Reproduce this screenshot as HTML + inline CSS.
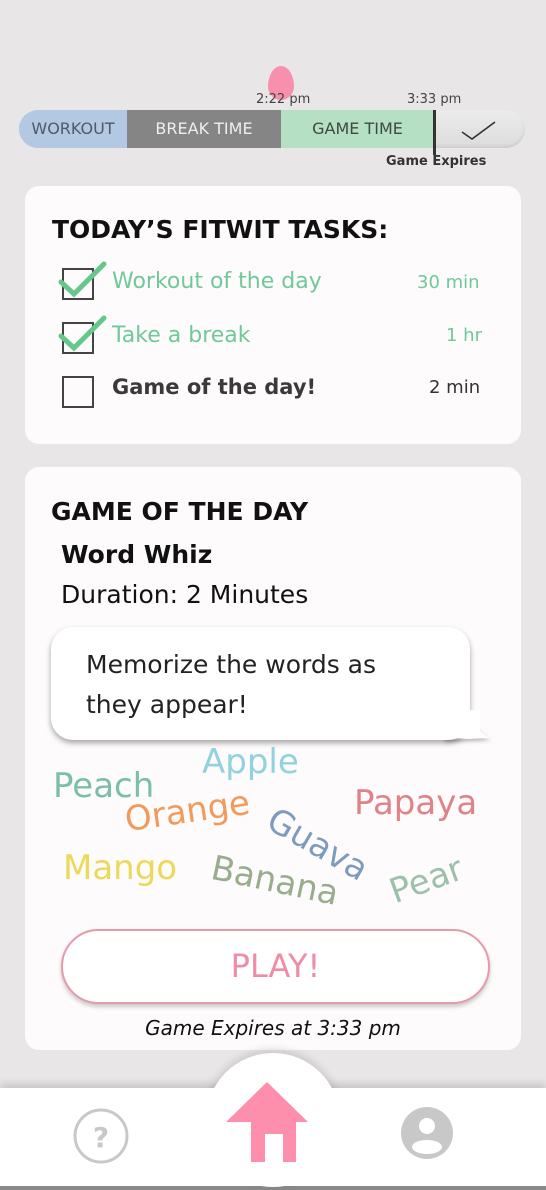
<!DOCTYPE html>
<html><head><meta charset="utf-8"><style>
*{margin:0;padding:0;box-sizing:border-box}
body{width:546px;height:1190px;background:#e8e6e7;font-family:"DejaVu Sans","Liberation Sans",sans-serif;position:relative;overflow:hidden;color:#222}
.abs{position:absolute}
.card{position:absolute;left:25px;width:496px;background:#fdfbfb;border-radius:14px}
.w{position:absolute;white-space:nowrap;font-size:34px}
</style></head><body>
<!-- timeline -->
<div class="abs" style="left:268px;top:66px;width:26px;height:34px;background:#f890ad;border-radius:50% 50% 50% 50%/60% 60% 40% 40%"></div>
<div class="abs" style="left:256px;top:92px;font-size:13px;color:#444">2:22 pm</div>
<div class="abs" style="left:407px;top:92px;font-size:13px;color:#444">3:33 pm</div>
<div class="abs" style="left:19px;top:110px;width:506px;height:38px;border-radius:19px;overflow:hidden;background:linear-gradient(#ececec,#dcdcdc);box-shadow:inset 0 -2px 3px rgba(0,0,0,.08)">
 <div class="abs" style="left:0;top:0;width:108px;height:38px;background:#b3c8e2;color:#4c5a6a;font-size:16px;line-height:38px;text-align:center">WORKOUT</div>
 <div class="abs" style="left:108px;top:0;width:154px;height:38px;background:#858585;color:#eee;font-size:16px;line-height:38px;text-align:center">BREAK TIME</div>
 <div class="abs" style="left:262px;top:0;width:153px;height:38px;background:#b6e0c4;color:#3d4a44;font-size:16px;line-height:38px;text-align:center">GAME TIME</div>
 <svg class="abs" style="left:440px;top:8px" width="40" height="24"><path d="M3 14 L13 21 L36 4" fill="none" stroke="#333" stroke-width="1.6"/></svg>
</div>
<div class="abs" style="left:433px;top:110px;width:3px;height:45px;background:#333"></div>
<div class="abs" style="left:386px;top:154px;font-size:13px;font-weight:bold;color:#333">Game Expires</div>

<!-- tasks card -->
<div class="card" style="top:186px;height:258px"></div>
<div class="abs" style="left:52px;top:215px;font-size:25px;font-weight:bold;color:#111">TODAY’S FITWIT TASKS:</div>
<div class="abs" style="left:62px;top:268px;width:32px;height:32px;border:2px solid #444"></div>
<svg class="abs" style="left:56px;top:260px" width="56" height="42"><path d="M5 22 L18 34 L48 4" fill="none" stroke="#66c78b" stroke-width="5" stroke-linecap="round"/></svg>
<div class="abs" style="left:112px;top:269px;font-size:22px;color:#6fc998">Workout of the day</div>
<div class="abs" style="left:417px;top:272px;font-size:18px;color:#6fc998">30 min</div>
<div class="abs" style="left:62px;top:322px;width:32px;height:32px;border:2px solid #444"></div>
<svg class="abs" style="left:56px;top:314px" width="56" height="42"><path d="M5 22 L18 34 L48 4" fill="none" stroke="#66c78b" stroke-width="5" stroke-linecap="round"/></svg>
<div class="abs" style="left:112px;top:323px;font-size:22px;color:#6fc998">Take a break</div>
<div class="abs" style="left:446px;top:325px;font-size:18px;color:#6fc998">1 hr</div>
<div class="abs" style="left:62px;top:376px;width:32px;height:32px;border:2px solid #444"></div>
<div class="abs" style="left:112px;top:375px;font-size:21px;font-weight:bold;color:#3a3a3a">Game of the day!</div>
<div class="abs" style="left:429px;top:377px;font-size:18px;color:#333">2 min</div>

<!-- game card -->
<div class="card" style="top:467px;height:583px"></div>
<div class="abs" style="left:51px;top:497px;font-size:25px;font-weight:bold;color:#111">GAME OF THE DAY</div>
<div class="abs" style="left:61px;top:540px;font-size:25px;font-weight:bold;color:#111">Word Whiz</div>
<div class="abs" style="left:61px;top:580px;font-size:25px;color:#111">Duration: 2 Minutes</div>
<svg class="abs" style="left:440px;top:700px" width="56" height="48"><path d="M5 0 L25 0 Q30 28 50 38 L5 40 Z" fill="#fff" style="filter:drop-shadow(0 2px 2px rgba(0,0,0,.3))"/></svg>
<div class="abs" style="left:51px;top:627px;width:419px;height:113px;background:#fff;border-radius:22px;box-shadow:0 3px 6px rgba(0,0,0,.35)"></div>
<div class="abs" style="left:440px;top:710px;width:40px;height:28px;background:#fff"></div>
<div class="abs" style="left:86px;top:645px;font-size:25px;line-height:40px;color:#222">Memorize the words as<br>they appear!</div>

<div class="w" style="left:53px;top:766px;color:#7bbfa7">Peach</div>
<div class="w" style="left:202px;top:742px;color:#92d2de">Apple</div>
<div class="w" style="left:354px;top:783px;color:#e08389">Papaya</div>
<div class="w" style="left:128px;top:800px;color:#f29a5c;transform:rotate(-8deg);transform-origin:left bottom">Orange</div>
<div class="w" style="left:280px;top:800px;color:#7e9bbd;transform:rotate(30deg);transform-origin:left top">Guava</div>
<div class="w" style="left:63px;top:848px;color:#ecd95c">Mango</div>
<div class="w" style="left:216px;top:848px;color:#97ad8c;transform:rotate(12deg);transform-origin:left top">Banana</div>
<div class="w" style="left:398px;top:872px;color:#9cc1ab;transform:rotate(-20deg);transform-origin:left bottom">Pear</div>

<div class="abs" style="left:61px;top:929px;width:429px;height:75px;border-radius:38px;border:2px solid #e69aab;background:#fff;box-shadow:0 3px 4px rgba(0,0,0,.2);text-align:center;line-height:71px;font-size:32px;color:#f08ca6">PLAY!</div>
<div class="abs" style="left:0;width:546px;top:1016px;text-align:center;font-size:20px;font-style:italic;color:#111">Game Expires at 3:33 pm</div>

<!-- bottom nav -->
<div class="abs" style="left:0;top:1088px;width:546px;height:98px;background:#fff;box-shadow:0 -4px 8px rgba(0,0,0,.15)"></div>
<div class="abs" style="left:0;top:1186px;width:546px;height:4px;background:#888"></div>
<div class="abs" style="left:206px;top:1053px;width:134px;height:134px;border-radius:50%;background:#fff;box-shadow:0 -4px 8px rgba(0,0,0,.12)"></div>
<div class="abs" style="left:200px;top:1088px;width:146px;height:98px;background:#fff"></div>
<svg class="abs" style="left:226px;top:1082px" width="84" height="82"><path d="M41 0 L82 40 L70 40 L70 80 L57 80 L57 52 L39 52 L39 80 L25 80 L25 40 L0 40 Z" fill="#fd8fac"/></svg>
<svg class="abs" style="left:72px;top:1107px" width="58" height="58"><circle cx="29" cy="29" r="26" fill="none" stroke="#c8c8c8" stroke-width="3"/><text x="29" y="40" text-anchor="middle" font-size="28" font-weight="bold" fill="#c8c8c8" font-family="DejaVu Sans">?</text></svg>
<svg class="abs" style="left:399px;top:1105px" width="56" height="56"><circle cx="28" cy="28" r="26" fill="#c8c8c8"/><circle cx="28" cy="21" r="8" fill="#fff"/><ellipse cx="28" cy="42" rx="15" ry="7" fill="#fff"/></svg>
</body></html>
